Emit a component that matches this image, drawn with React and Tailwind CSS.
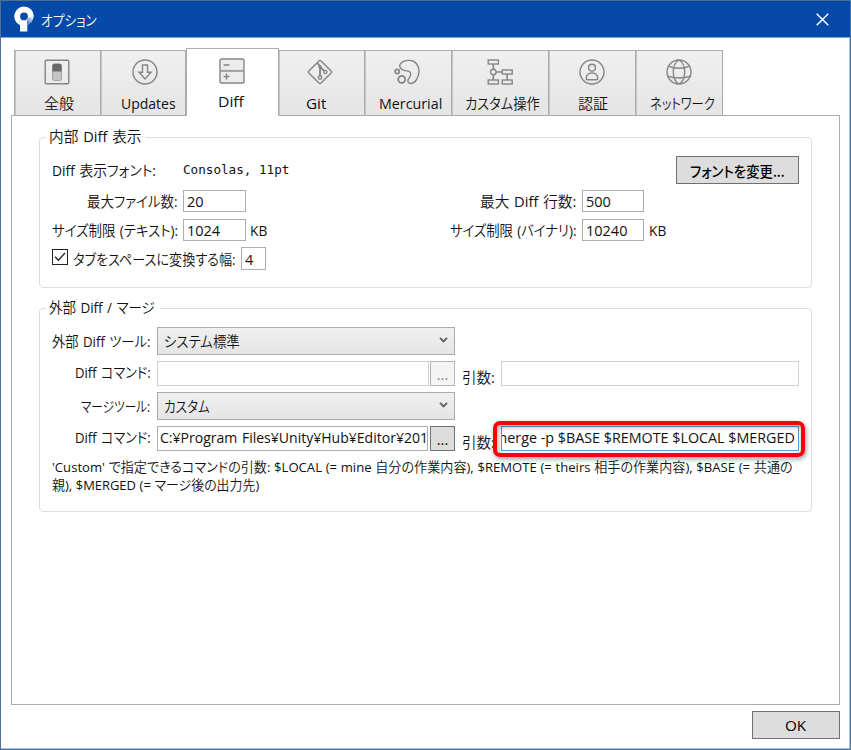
import { useLayoutEffect, useRef } from 'react'

const UI_FONT = "font-['Open_Sans','Noto_Sans_CJK_JP_DemiLight','Noto_Sans_CJK_JP',sans-serif]"

// Text that is condensed or widened to fill the width of its box.
function Fit({ className = '', children }) {
  const box = useRef(null)
  const text = useRef(null)
  useLayoutEffect(() => {
    const natural = text.current.offsetWidth
    if (natural) text.current.style.transform = `scaleX(${box.current.clientWidth / natural})`
  }, [children])
  return (
    <span ref={box} className={`block shrink-0 whitespace-nowrap ${className}`}>
      <span ref={text} className="inline-block origin-left whitespace-pre">{children}</span>
    </span>
  )
}

function Icon({ children }) {
  return (
    <svg viewBox="0 0 26 26" className="block size-[26px] shrink-0" fill="none" stroke="#858585" strokeWidth="1.4">
      {children}
    </svg>
  )
}

const icons = {
  general: (
    <Icon>
      <rect x="1.2" y="1.2" width="23.6" height="23.6" rx="1.2" />
      <rect x="8.5" y="5" width="9" height="16.5" rx="1.8" fill="#c4c4c4" stroke="#a2a2a2" strokeWidth="1" />
      <path d="M8.5 12.5V6.5Q8.5 4.7 10.3 4.7H15.7Q17.5 4.7 17.5 6.5V12.5Z" fill="#696969" stroke="none" />
    </Icon>
  ),
  updates: (
    <Icon>
      <circle cx="13" cy="13" r="12" />
      <path d="M10.5 6H15.5V13.2H19L13 20L7 13.2H10.5Z" />
    </Icon>
  ),
  diff: (
    <Icon>
      <rect x="1" y="1" width="24" height="24" rx="1.5" fill="#ececec" />
      <path d="M1 12.9H25" stroke="#a0a0a0" strokeWidth="2" />
      <path d="M4.5 7H10.5" stroke="#a0a0a0" strokeWidth="2" />
      <path d="M4.5 18.5H10.5M7.5 15.5V21.5" strokeWidth="1.5" />
    </Icon>
  ),
  git: (
    <Icon>
      <path d="M12 1.9Q13 .9 14 1.9L24.1 12Q25.1 13 24.1 14L14 24.1Q13 25.1 12 24.1L1.9 14Q.9 13 1.9 12Z" />
      <path d="M10.4 4.2L13 7.2V17M13.2 8L17.5 12.2" strokeWidth="1.8" />
      <circle cx="13" cy="18.5" r="1.7" />
      <circle cx="18.3" cy="13" r="1.6" />
      <circle cx="13" cy="7.7" r="1" fill="#858585" />
    </Icon>
  ),
  mercurial: (
    <Icon>
      <path d="M6.2 5.2C8.2 2.4 12.2 1.2 16 1.4C21.8 1.8 25.2 6.8 25 12.7C24.7 19 20.6 24.6 16.8 24.5C14.2 24.4 13.2 22.2 14.4 20.2C15.7 18 17.7 15.8 16.2 13.4C14.9 11.4 12.5 12.4 9.6 11.2C6.7 10 4.7 7.4 6.2 5.2Z" />
      <circle cx="3.2" cy="12.5" r="2.1" strokeWidth="1.7" />
      <circle cx="7.7" cy="20.3" r="3.5" strokeWidth="1.8" />
    </Icon>
  ),
  custom: (
    <Icon>
      <rect x="1.2" y="1" width="10.2" height="4" />
      <rect x="1.2" y="21" width="10.2" height="4" />
      <rect x="15.2" y="11" width="10" height="4" />
      <rect x="15.2" y="21" width="10" height="4" />
      <circle cx="6.3" cy="13" r="2.8" />
      <path d="M6.3 5V10.2M6.3 15.8V21M9.1 13H15.2M20.2 15V21" strokeWidth="1.6" />
    </Icon>
  ),
  auth: (
    <Icon>
      <circle cx="13" cy="13" r="12" />
      <circle cx="13" cy="8.7" r="3.4" />
      <path d="M7.2 19.8C7.2 16 9.4 14 13 14C16.6 14 18.8 16 18.8 19.8Q18.8 20.8 17.6 20.8H8.4Q7.2 20.8 7.2 19.8Z" />
    </Icon>
  ),
  network: (
    <Icon>
      <circle cx="13" cy="13" r="12" />
      <path d="M13 1C5.4 5 5.4 21 13 25M13 1C20.6 5 20.6 21 13 25M3.2 7.4C8 9.8 18 9.8 22.8 7.4M1.6 17.2C8 19.6 18 19.6 24.4 17.2" />
    </Icon>
  ),
}

const tabs = [
  { id: 'general', label: '全般', tab: 'w-[87px]', icon: 'pl-[29px]', text: 'ml-[29px] w-[30px]' },
  { id: 'updates', label: 'Updates', tab: 'w-[85px]', icon: 'pl-[31px]', text: 'ml-[20px] w-[55px]' },
  { id: 'diff', label: 'Diff', tab: 'w-[93px]', icon: 'pl-[32px]', text: 'ml-[31px] w-[26px]', active: true },
  { id: 'git', label: 'Git', tab: 'w-[86px]', icon: 'pl-[28px]', text: 'ml-[27px] w-[20px]' },
  { id: 'mercurial', label: 'Mercurial', tab: 'w-[87px]', icon: 'pl-[29px]', text: 'ml-[14px] w-[63px]' },
  { id: 'custom', label: 'カスタム操作', tab: 'w-[97px]', icon: 'pl-[35px]', text: 'ml-[13px] w-[75px]' },
  { id: 'auth', label: '認証', tab: 'w-[87px]', icon: 'pl-[30px]', text: 'ml-[29px] w-[30px]' },
  { id: 'network', label: 'ネットワーク', tab: 'w-[87px]', icon: 'pl-[30px]', text: 'ml-[14px] w-[65px]' },
]

function Tab({ id, label, tab, icon, text, active }) {
  const look = active
    ? 'z-10 -mb-px h-[68px] border-x bg-white pt-[9px]'
    : 'h-[65px] border-r bg-linear-to-b from-[#f0f0f0] to-[#e5e5e5] pt-[8px] first:border-l shadow-[inset_1px_0_#c4c4c4]'
  return (
    <div className={`relative shrink-0 border-t border-[#acacac] ${tab} ${look}`}>
      <div className={icon}>{icons[id]}</div>
      <Fit className={`leading-[20px] ${active ? 'mt-[8px]' : 'mt-[9px]'} ${text}`}>{label}</Fit>
    </div>
  )
}

const fieldTones = {
  normal: 'border-[#abadb3]',
  disabled: 'border-[#cfd0d3]',
  focused: 'border-[#569de5]',
}

function Field({ className = '', tone = 'normal', children }) {
  return (
    <div className={`flex shrink-0 items-center overflow-hidden border bg-white ${fieldTones[tone]} ${className}`}>
      {children}
    </div>
  )
}

function Combo({ children }) {
  return (
    <div className="ml-[7px] flex h-[28px] w-[298px] shrink-0 items-center justify-between border border-[#acacac] bg-linear-to-b from-[#f0f0f0] to-[#e5e5e5] pr-[6px] pl-[6px]">
      <div className="pt-[2px]">{children}</div>
      <svg viewBox="0 0 9 6" className="mb-[2px] h-[6px] w-[9px]" fill="none" stroke="#606060" strokeWidth="1.9">
        <path d="M1 .8L4.5 4.3L8 .8" />
      </svg>
    </div>
  )
}

function Group({ title, titleClass, className, children }) {
  return (
    <div className={`relative ml-[27px] w-[773px] rounded-[4px] border border-[#d5dfe5] ${className}`}>
      <div className="absolute -top-[12px] left-[6px] bg-white pr-[5px] pl-[3px] leading-[22px]">
        <Fit className={titleClass}>{title}</Fit>
      </div>
      {children}
    </div>
  )
}

export default function App() {
  return (
    <div className={`flex h-[750px] w-[851px] flex-col overflow-hidden border border-[#4d7298] bg-white text-[14.5px] leading-[20px] text-[#111] [font-feature-settings:'palt'] ${UI_FONT}`}>
      <div className="flex h-[37px] shrink-0 items-center border-b border-[#7da3dc] bg-[#0549a9]">
        <svg viewBox="0 0 20 26" className="ml-[13px] h-[26px] w-[20px]">
          <defs>
            <linearGradient id="fade" x1="1" y1=".1" x2=".4" y2="1">
              <stop offset="0" stopColor="#fff" />
              <stop offset="1" stopColor="#3c70bd" />
            </linearGradient>
          </defs>
          <path d="M12 13L19.7 10Q19 17 13 19.5Z" fill="url(#fade)" />
          <path fillRule="evenodd" fill="#fff" d="M10 .5A9.8 9.8 0 0 1 19.8 10.3L13.8 12.3Q12.5 14.5 13.3 19V25.5H6V19.2A9.8 9.8 0 0 1 10 .5ZM10 6.5A3.9 3.9 0 1 0 10 14.3A3.9 3.9 0 1 0 10 6.5Z" />
        </svg>
        <Fit className="mt-[3px] ml-[7px] w-[56px] text-white">オプション</Fit>
        <svg viewBox="0 0 13 13" className="mr-[21px] ml-auto size-[13px]" stroke="#fff" strokeWidth="1.5">
          <path d="M.7.7L12.3 12.3M12.3.7L.7 12.3" />
        </svg>
      </div>

      <div className="flex flex-1 flex-col border-r border-b border-[#a9c3e6]">
        <div className="mt-[10px] ml-[13px] flex h-[67px] shrink-0 items-end">
          {tabs.map((t) => <Tab key={t.id} {...t} />)}
        </div>

        <div className="ml-[10px] h-[590px] w-[829px] shrink-0 border border-[#acacac] pt-[21px] [word-spacing:1px]">
          <Group title="内部 Diff 表示" titleClass="w-[92px]" className="h-[151px] pt-[18px]">
            <div className="flex h-[28px] items-center">
              <Fit className="mt-[2px] ml-[12px] w-[104px]">Diff 表示フォント:</Fit>
              <Fit className="ml-[27px] w-[106px] font-['DejaVu_Sans_Mono',monospace] text-[12.5px] [word-spacing:0]">Consolas, 11pt</Fit>
              <div className="mr-[12px] ml-auto flex h-[28px] w-[123px] items-center justify-center border border-[#707070] bg-[#ddd] pt-[2px]">
                <Fit className="w-[95px] font-['Noto_Sans_CJK_JP',sans-serif] font-medium text-black">フォントを変更...</Fit>
              </div>
            </div>
            <div className="mt-[6px] flex h-[22px] items-center">
              <Fit className="mt-[2px] ml-[47px] w-[91px]">最大ファイル数:</Fit>
              <Field className="ml-[5px] h-[22px] w-[63px] pt-[2px] pl-[3px]"><Fit className="w-[17px]">20</Fit></Field>
              <Fit className="mt-[2px] ml-[234px] w-[96px]">最大 Diff 行数:</Fit>
              <Field className="ml-[6px] h-[22px] w-[62px] pt-[2px] pl-[3px]"><Fit className="w-[25px]">500</Fit></Field>
            </div>
            <div className="mt-[7px] flex h-[22px] items-center">
              <Fit className="mt-[2px] ml-[12px] w-[126px]">サイズ制限 (テキスト):</Fit>
              <Field className="ml-[5px] h-[22px] w-[63px] pt-[2px] pl-[3px]"><Fit className="w-[33px]">1024</Fit></Field>
              <Fit className="mt-[2px] ml-[4px] w-[17px]">KB</Fit>
              <Fit className="mt-[2px] ml-[183px] w-[126px]">サイズ制限 (バイナリ):</Fit>
              <Field className="ml-[6px] h-[22px] w-[62px] pt-[2px] pl-[3px]"><Fit className="w-[41px]">10240</Fit></Field>
              <Fit className="mt-[2px] ml-[5px] w-[17px]">KB</Fit>
            </div>
            <div className="mt-[6px] flex h-[23px] items-center">
              <div className="mb-[3px] ml-[12px] flex size-[16px] items-center justify-center border border-[#222]">
                <svg viewBox="0 0 14 14" className="size-[14px]" fill="none" stroke="#222" strokeWidth="1.3">
                  <path d="M2 6.8L5.3 10.3L12 3" />
                </svg>
              </div>
              <Fit className="mt-[2px] ml-[5px] w-[163px]">タブをスペースに変換する幅:</Fit>
              <Field className="ml-[5px] h-[23px] w-[25px] pt-[2px] pl-[3px]"><Fit className="w-[8px]">4</Fit></Field>
            </div>
          </Group>

          <Group title="外部 Diff / マージ" titleClass="w-[106px]" className="mt-[20px] h-[204px] pt-[18px]">
            <div className="flex h-[28px] items-center">
              <Fit className="mt-[2px] ml-[12px] w-[98px]">外部 Diff ツール:</Fit>
              <Combo><Fit className="w-[76px]">システム標準</Fit></Combo>
            </div>
            <div className="mt-[6px] flex h-[25px] items-center">
              <Fit className="mb-[2px] ml-[35px] w-[76px]">Diff コマンド:</Fit>
              <Field tone="disabled" className="ml-[6px] h-[25px] w-[272px]" />
              <div className="ml-px flex h-[25px] w-[25px] shrink-0 items-center justify-center border border-[#b4b4b4] bg-[#f4f4f4] pt-[2px] text-[#838383]">...</div>
              <Fit className="mt-[8px] ml-[7px] w-[33px]">引数:</Fit>
              <Field tone="disabled" className="ml-[6px] h-[25px] w-[298px]" />
            </div>
            <div className="mt-[6px] flex h-[28px] items-center">
              <Fit className="mt-[2px] ml-[41px] w-[69px]">マージツール:</Fit>
              <Combo><Fit className="w-[46px]">カスタム</Fit></Combo>
            </div>
            <div className="mt-[6px] flex h-[25px] items-center">
              <Fit className="mb-[2px] ml-[35px] w-[76px]">Diff コマンド:</Fit>
              <Field className="ml-[6px] h-[25px] w-[271px] pb-[2px] pl-[2px]">
                <Fit className="w-[268px]">C:¥Program Files¥Unity¥Hub¥Editor¥201</Fit>
              </Field>
              <div className="ml-[2px] flex h-[25px] w-[25px] shrink-0 items-center justify-center border border-[#707070] bg-[#ddd] pt-[2px] text-black">...</div>
              <Fit className="mt-[8px] ml-[7px] w-[33px]">引数:</Fit>
              <div className="relative ml-[6px]">
                <Field tone="focused" className="h-[25px] w-[298px] justify-end pr-[3px] pb-[2px]">
                  <Fit className="w-[301px] [word-spacing:0]">merge -p $BASE $REMOTE $LOCAL $MERGED</Fit>
                </Field>
                <div className="absolute -top-[5px] -right-[6px] -bottom-[6px] -left-[8px] rounded-[7px] border-4 border-[#fb0007] shadow-[1px_2px_5px_rgba(0,0,0,0.4),inset_1px_2px_5px_rgba(0,0,0,0.35)]" />
              </div>
            </div>
            <div className="mt-[7px] ml-[12px] text-[13.2px] leading-[18px] [word-spacing:0.3px]">
              <Fit className="w-[741px]">'Custom' で指定できるコマンドの引数: $LOCAL (= mine 自分の作業内容), $REMOTE (= theirs 相手の作業内容), $BASE (= 共通の</Fit>
              <Fit className="w-[207px]">親), $MERGED (= マージ後の出力先)</Fit>
            </div>
          </Group>
        </div>

        <div className="mt-[6px] mr-[9px] ml-auto flex h-[28px] w-[88px] shrink-0 items-center justify-center border border-[#707070] bg-[#ddd] pt-[2px] pr-px">
          <Fit className="w-[21px] font-medium text-black">OK</Fit>
        </div>
      </div>
    </div>
  )
}
